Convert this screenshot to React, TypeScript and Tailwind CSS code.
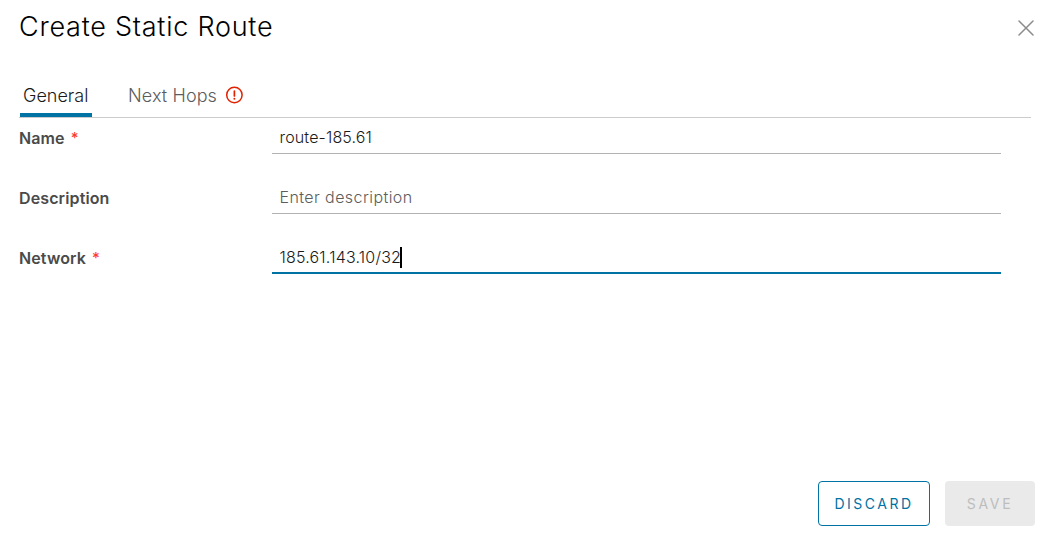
type FieldProps = {
  label: string;
  inputClass: string;
  required?: boolean;
  value?: string;
  placeholder?: string;
  focused?: boolean;
};

function Field({ label, inputClass, required, value, placeholder, focused }: FieldProps) {
  return (
    <div className="flex h-[60px] items-start">
      <label className="flex w-[253px] pt-[8px] text-base leading-6 font-semibold text-[#4a4a4a]">
        <span className="tracking-[0.12px]">{label}</span>
        {required && <span className="ml-[6px] text-[15px] font-medium text-[#ff3b30]">*</span>}
      </label>
      <div
        className={`relative flex h-[36px] w-[729px] items-end pr-[7px] pl-[7.5px] ${
          focused ? "border-b-2 border-[#0072a3] pb-[3px]" : "border-b border-[#b3b3b3] pb-[4px]"
        }`}
      >
        <input
          className={`h-6 w-full bg-transparent p-0 text-base leading-6 font-light text-[#1a1a1a] outline-none placeholder:text-[#5c5c5c] placeholder:opacity-100 ${inputClass}`}
          defaultValue={value}
          placeholder={placeholder}
        />
        {focused && <span className="absolute top-[9px] left-[128px] h-[21px] w-[2px] bg-black" />}
      </div>
    </div>
  );
}

export default function App() {
  return (
    <main className="flex h-[542px] w-[1053px] flex-col overflow-hidden bg-white font-['Inter',sans-serif]">
      <header className="flex h-[76px] items-start justify-between px-[19px]">
        <h1 className="pt-[9px] text-[27px] leading-9 font-light tracking-[0.75px] whitespace-nowrap text-black">
          Create Static Route
        </h1>
        <button aria-label="Close" className="mt-[20px]">
          <svg width="16" height="16" viewBox="0 0 16 16" fill="none" stroke="#8c8c8c" strokeWidth="1.5" strokeLinecap="round">
            <path d="M1 1 15 15M15 1 1 15" />
          </svg>
        </button>
      </header>

      <nav className="ml-[19px] flex h-[42px] w-[1012px] items-stretch border-b border-[#cccccc] pl-px">
        <button className="flex h-[41px] w-[72px] border-b-4 border-[#0072a3] pt-[8px] pl-[3px] text-lg leading-6 font-light text-[#1a1a1a]">
          General
        </button>
        <button className="ml-[36px] flex pt-[8px] text-lg leading-6 font-light text-[#5c5c5c]">
          <span className="w-[88px] text-left tracking-[0.1px] whitespace-nowrap">Next Hops</span>
          <svg className="mt-[2px] ml-[9px] shrink-0" width="18" height="18" viewBox="0 0 18 18" fill="none">
            <circle cx="9.4" cy="9" r="7.7" stroke="#e12200" strokeWidth="1.5" />
            <path d="M9.4 5v5" stroke="#e12200" strokeWidth="1.7" strokeLinecap="round" />
            <circle cx="9.4" cy="12.8" r="1" fill="#e12200" />
          </svg>
        </button>
      </nav>

      <form className="flex grow flex-col pl-[19px]">
        <Field label="Name" inputClass="tracking-[0.15px]" required value="route-185.61" />
        <Field label="Description" inputClass="tracking-[0.42px]" placeholder="Enter description" />
        <Field label="Network" inputClass="tracking-[0.2px]" required value="185.61.143.10/32" focused />
      </form>

      <footer className="flex justify-end gap-[15px] pr-[18px] pb-[16px]">
        <button className="h-[45px] w-[112px] rounded-[4px] border border-[#0072a3] pt-px text-sm tracking-[2.5px] text-[#0072a3]">
          DISCARD
        </button>
        <button className="h-[45px] w-[90px] rounded-[4px] bg-[#eaeaea] pt-px text-sm tracking-[2.7px] text-[#bdbdbd]" disabled>
          SAVE
        </button>
      </footer>
    </main>
  );
}
